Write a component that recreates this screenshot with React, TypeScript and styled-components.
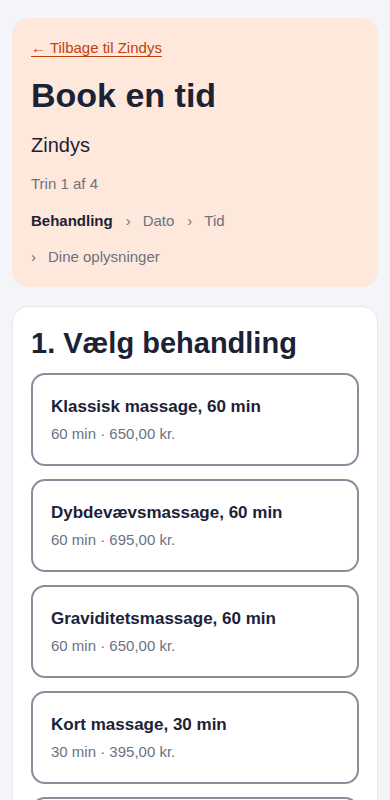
import React from "react";
import styled, { createGlobalStyle } from "styled-components";

const GlobalStyle = createGlobalStyle`
  html, body {
    margin: 0;
    padding: 0;
    background: #f3f5f9;
    font-family: "Liberation Sans", Arial, sans-serif;
    color: #1c2236;
  }
  * { box-sizing: border-box; }
`;

const Page = styled.div`
  display: flex;
  flex-direction: column;
  gap: 19px;
  padding: 18px 12px;
`;

const HeaderCard = styled.header`
  background: #fee8dc;
  border-radius: 16px;
  padding: 20px 19px;
  display: flex;
  flex-direction: column;
  gap: 17px;
`;

const BackLink = styled.a`
  font-size: 15px;
  line-height: 20px;
  color: #c2410c;
  text-decoration: underline;
  text-underline-offset: 3px;
  align-self: flex-start;
  cursor: pointer;
`;

const Title = styled.h1`
  margin: 0;
  font-size: 34px;
  line-height: 41px;
  font-weight: 700;
  color: #1c2236;
`;

const Shop = styled.div`
  font-size: 20px;
  line-height: 24px;
`;

const StepCount = styled.div`
  font-size: 15px;
  line-height: 20px;
  color: #6b7280;
`;

const Steps = styled.div`
  display: flex;
  flex-wrap: wrap;
  row-gap: 16px;
  column-gap: 13px;
  font-size: 15px;
  line-height: 20px;
  color: #6b7280;
`;

const Step = styled.span<{ $active?: boolean }>`
  display: inline-flex;
  gap: 12px;
  font-weight: ${(p) => (p.$active ? 700 : 400)};
  color: ${(p) => (p.$active ? "#1c2236" : "#6b7280")};
`;

const Sep = styled.span`
  color: #6b7280;
  font-weight: 400;
`;

const Panel = styled.section`
  background: #ffffff;
  border: 1px solid #e5e7eb;
  border-radius: 16px;
  padding: 19px 18px;
  display: flex;
  flex-direction: column;
  gap: 13px;
`;

const PanelTitle = styled.h2`
  margin: 0;
  font-size: 29px;
  line-height: 34px;
  font-weight: 700;
`;

const ServiceList = styled.div`
  display: flex;
  flex-direction: column;
  gap: 13px;
`;

const ServiceCard = styled.button`
  display: flex;
  flex-direction: column;
  gap: 6px;
  text-align: left;
  width: 100%;
  background: #fff;
  border: 2px solid #878e9c;
  border-radius: 14px;
  padding: 21px 18px 20px;
  font-family: inherit;
  cursor: pointer;
`;

const ServiceName = styled.span`
  font-size: 17px;
  line-height: 22px;
  font-weight: 700;
  color: #1c2236;
`;

const ServiceMeta = styled.span`
  font-size: 15px;
  line-height: 20px;
  color: #6b7280;
`;

const services = [
  { name: "Klassisk massage, 60 min", meta: "60 min · 650,00 kr." },
  { name: "Dybdevævsmassage, 60 min", meta: "60 min · 695,00 kr." },
  { name: "Graviditetsmassage, 60 min", meta: "60 min · 650,00 kr." },
  { name: "Kort massage, 30 min", meta: "30 min · 395,00 kr." },
  { name: "Hot stone massage, 75 min", meta: "75 min · 795,00 kr." },
];

const steps = ["Behandling", "Dato", "Tid", "Dine oplysninger"];

export default function App() {
  return (
    <>
      <GlobalStyle />
      <Page>
        <HeaderCard>
          <BackLink>← Tilbage til Zindys</BackLink>
          <Title>Book en tid</Title>
          <Shop>Zindys</Shop>
          <StepCount>Trin 1 af 4</StepCount>
          <Steps>
            {steps.map((s, i) => (
              <Step key={s} $active={i === 0}>
                {i > 0 && <Sep>›</Sep>}
                <span>{s}</span>
              </Step>
            ))}
          </Steps>
        </HeaderCard>
        <Panel>
          <PanelTitle>1. Vælg behandling</PanelTitle>
          <ServiceList>
            {services.map((s) => (
              <ServiceCard key={s.name}>
                <ServiceName>{s.name}</ServiceName>
                <ServiceMeta>{s.meta}</ServiceMeta>
              </ServiceCard>
            ))}
          </ServiceList>
        </Panel>
      </Page>
    </>
  );
}
